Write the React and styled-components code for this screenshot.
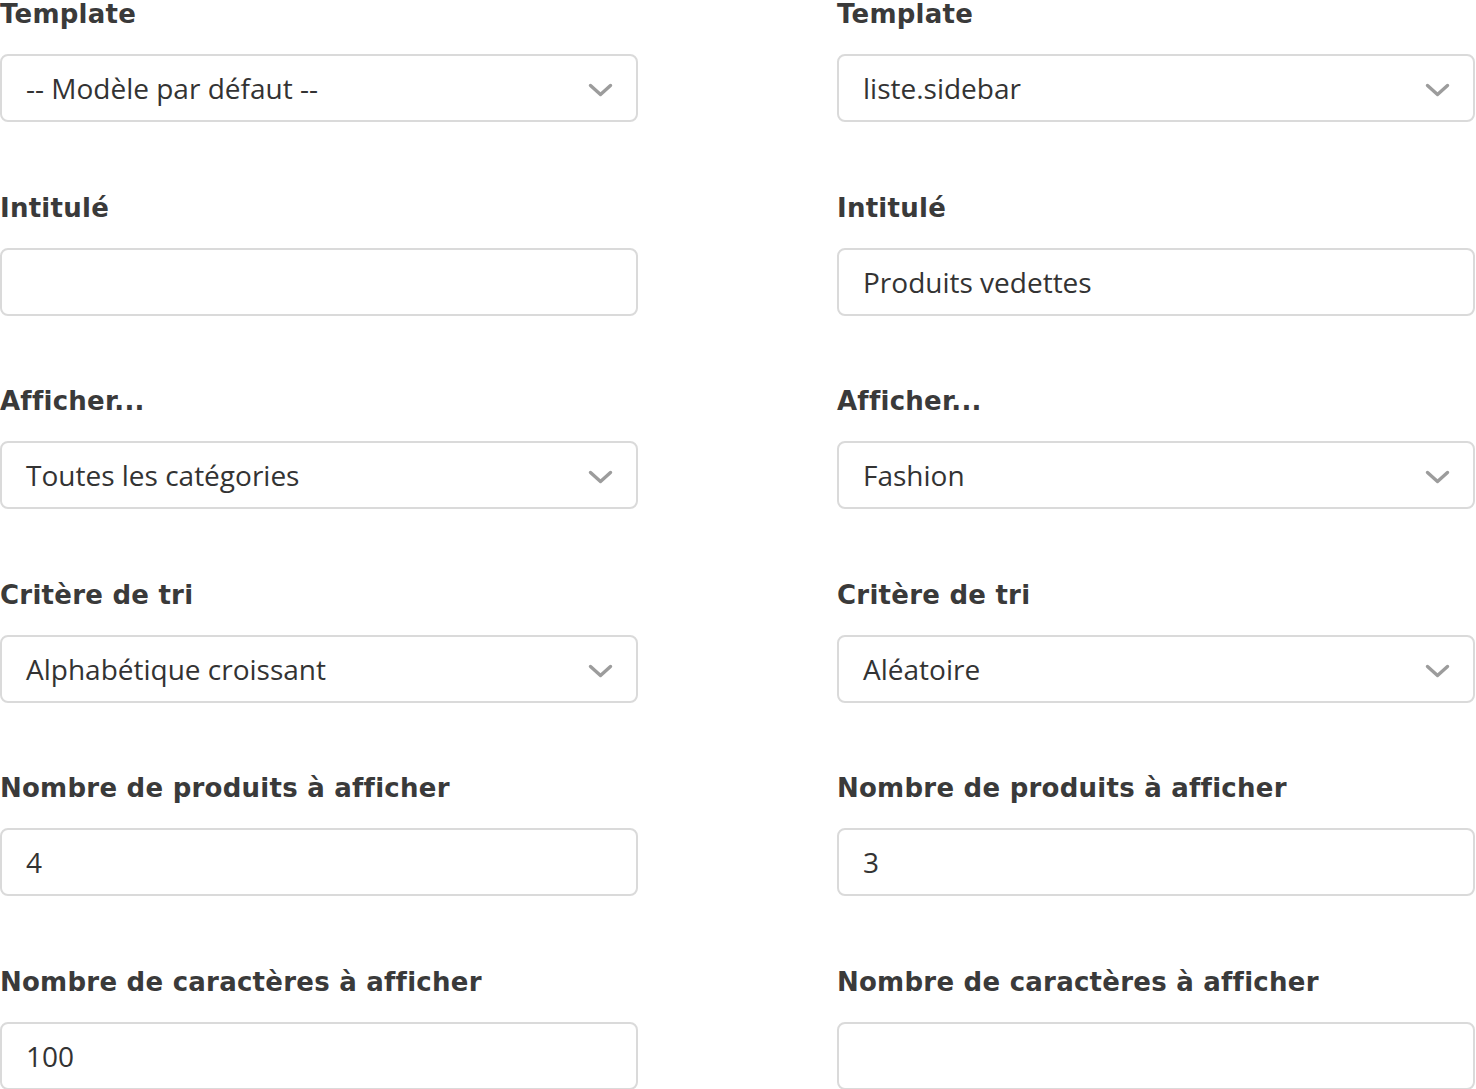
import styled, { createGlobalStyle } from "styled-components";

const GlobalStyle = createGlobalStyle`
  html, body {
    margin: 0;
    padding: 0;
    background: #fff;
  }
  body {
    font-family: "Open Sans", "Liberation Sans", sans-serif;
    color: #333;
  }
`;

const Page = styled.div`
  display: grid;
  grid-template-columns: 638px 638px;
  column-gap: 199px;
  width: 1476px;
  margin-top: -2px;
`;

const Column = styled.div`
  display: flex;
  flex-direction: column;
  gap: 69.5px;
`;

const Field = styled.div`
  display: flex;
  flex-direction: column;
  gap: 24px;
`;

const Label = styled.label`
  font-family: "DejaVu Sans", Lato, sans-serif;
  font-weight: 700;
  font-size: 26px;
  line-height: 32px;
  letter-spacing: 0.25px;
  color: #3a3a3a;
`;

const Box = styled.div`
  position: relative;
  height: 68px;
  box-sizing: border-box;
  border: 2px solid #dadada;
  border-radius: 8px;
  background: #fff;
`;

const Control = styled.input`
  all: unset;
  box-sizing: border-box;
  width: 100%;
  height: 100%;
  padding: 0 70px 0 24px;
  font-family: "Open Sans", "Liberation Sans", sans-serif;
  font-size: 28px;
  color: #333;
  display: flex;
  align-items: center;
`;

const Chevron = styled.svg`
  position: absolute;
  right: 23px;
  top: 50%;
  width: 25px;
  height: 14px;
  margin-top: -5px;
  pointer-events: none;
`;

const ChevronIcon = () => (
  <Chevron viewBox="0 0 25 14">
    <path d="M2.5 2.5 L12.5 11.5 L22.5 2.5" fill="none" stroke="#9c9c9c" strokeWidth="3.4" strokeLinecap="round" strokeLinejoin="round" />
  </Chevron>
);

function TextField({ label, value }) {
  return (
    <Field>
      <Label>{label}</Label>
      <Box>
        <Control type="text" defaultValue={value} />
      </Box>
    </Field>
  );
}

function SelectField({ label, value }) {
  return (
    <Field>
      <Label>{label}</Label>
      <Box>
        <Control as="div">{value}</Control>
        <ChevronIcon />
      </Box>
    </Field>
  );
}

const columns = [
  {
    template: "-- Modèle par défaut --",
    title: "",
    show: "Toutes les catégories",
    sort: "Alphabétique croissant",
    count: "4",
    chars: "100",
  },
  {
    template: "liste.sidebar",
    title: "Produits vedettes",
    show: "Fashion",
    sort: "Aléatoire",
    count: "3",
    chars: "",
  },
];

export default function App() {
  return (
    <>
      <GlobalStyle />
      <Page>
        {columns.map((c, i) => (
          <Column key={i}>
            <SelectField label="Template" value={c.template} />
            <TextField label="Intitulé" value={c.title} />
            <SelectField label="Afficher..." value={c.show} />
            <SelectField label="Critère de tri" value={c.sort} />
            <TextField label="Nombre de produits à afficher" value={c.count} />
            <TextField label="Nombre de caractères à afficher" value={c.chars} />
          </Column>
        ))}
      </Page>
    </>
  );
}
